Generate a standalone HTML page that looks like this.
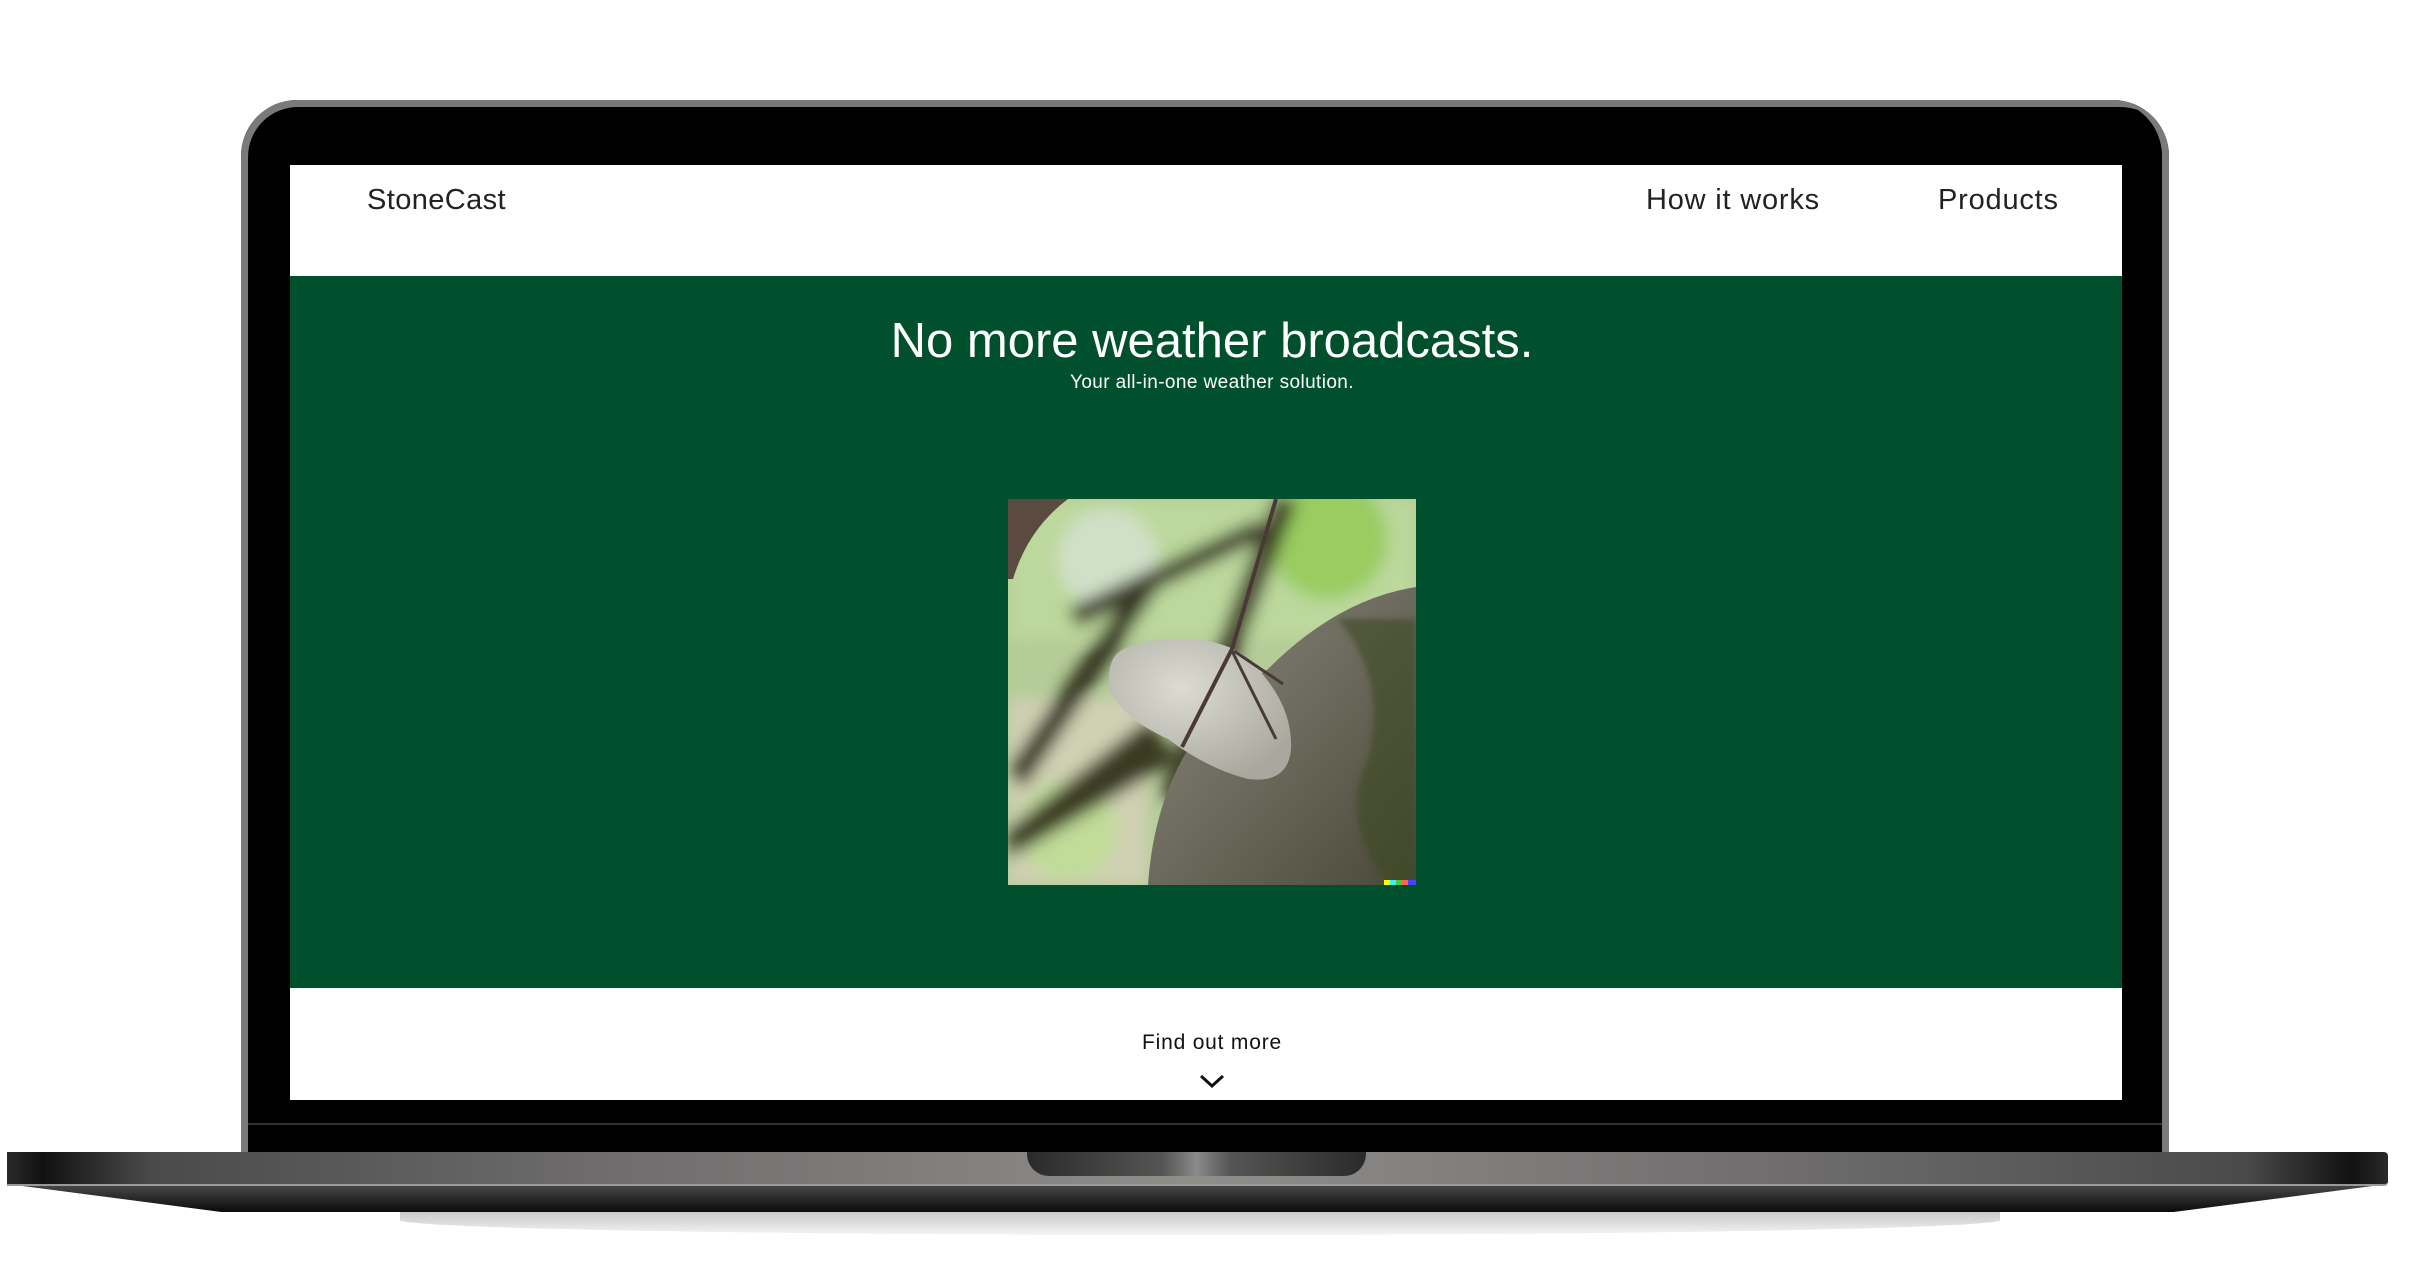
<!DOCTYPE html>
<html><head><meta charset="utf-8"><style>
html,body{margin:0;padding:0;background:#fff;}
body{width:2419px;height:1266px;position:relative;overflow:hidden;font-family:"Liberation Sans","DejaVu Sans",sans-serif;}
.abs{position:absolute;}
#lid{left:241px;top:100px;width:1928px;height:1060px;background:#000;border-radius:56px 56px 0 0;box-shadow:inset 7px 7px 0 #7a7a7a,inset -7px 0 0 #7a7a7a;}
#lidin{left:248px;top:107px;width:1914px;height:1053px;background:#000;border-radius:50px 50px 0 0;}
#screen{left:290px;top:165px;width:1832px;height:935px;background:#fff;}
#green{left:290px;top:276px;width:1832px;height:712px;background:#01502d;}
.nav{top:184px;font-size:29px;color:#222;letter-spacing:0.8px;}
h1{position:absolute;margin:0;left:296px;width:1832px;text-align:center;top:313px;font-size:49px;font-weight:normal;color:#fff;}
.sub{left:296px;width:1832px;text-align:center;top:372px;font-size:19px;color:#fff;letter-spacing:0.4px;}
.find{left:296px;width:1832px;text-align:center;top:1031px;font-size:21px;color:#111;letter-spacing:0.8px;}
#base{left:7px;top:1152px;width:2381px;height:32px;border-radius:0 4px 4px 0;background:linear-gradient(90deg,#2a2a2a 0,#111 1.5%,#4a4a4a 6%,#6e6c6c 25%,#8f8e8b 50%,#6e6c6c 75%,#4a4a4a 94%,#111 98.5%,#2a2a2a 100%);border-bottom:2px solid #999;}
#notch{left:1027px;top:1152px;width:339px;height:24px;border-radius:0 0 22px 22px;background:linear-gradient(90deg,#2a2a2a,#555 40%,#8a8a8a 50%,#555 60%,#2a2a2a);}
</style></head><body>
<div class="abs" style="left:400px;top:1205px;width:1600px;height:30px;border-radius:0 0 50% 50%;background:linear-gradient(#bbb,#f4f4f4);"></div>
<div id="lid" class="abs"></div>
<div id="lidin" class="abs"></div>
<div class="abs" style="left:248px;top:1123px;width:1914px;height:2px;background:#333;"></div>
<div id="screen" class="abs"></div>
<div id="green" class="abs"></div>
<div class="abs nav" style="left:367px;letter-spacing:0.4px;">StoneCast</div>
<div class="abs nav" style="left:1646px;">How it works</div>
<div class="abs nav" style="left:1938px;">Products</div>
<h1>No more weather broadcasts.</h1>
<div class="abs sub">Your all-in-one weather solution.</div>
<svg class="abs" style="left:1008px;top:499px" width="408" height="386" viewBox="0 0 408 386">
<defs>
<filter id="b1"><feGaussianBlur stdDeviation="8"/></filter>
<filter id="b2"><feGaussianBlur stdDeviation="3"/></filter>
<radialGradient id="st" cx="0.4" cy="0.35" r="0.7"><stop offset="0" stop-color="#dcdcd4"/><stop offset="1" stop-color="#a8a89e"/></radialGradient>
<linearGradient id="rk" x1="0" y1="0" x2="1" y2="1"><stop offset="0" stop-color="#8a8a7c"/><stop offset="0.5" stop-color="#6c6a5c"/><stop offset="1" stop-color="#4a4838"/></linearGradient>
</defs>
<rect width="408" height="386" fill="#b4cc98"/>
<g filter="url(#b1)">
<rect x="0" y="0" width="408" height="140" fill="#bcd89c"/>
<circle cx="320" cy="40" r="60" fill="#9acc60"/>
<circle cx="100" cy="60" r="50" fill="#d0e0c8"/>
<rect x="0" y="200" width="140" height="186" fill="#d0d0b4"/>
<circle cx="60" cy="330" r="50" fill="#c0dc98"/>
<path d="M0 330 L140 220 L170 260 L0 360Z" fill="#3a3a22"/>
<path d="M0 270 L130 80 L150 90 L15 290Z" fill="#30301c"/>
<path d="M150 300 L265 0 L290 0 L175 300Z" fill="#3c3c28"/>
<path d="M60 110 L250 20 L258 38 L70 128Z" fill="#3a3a26"/>
</g>
<path d="M0 0 L60 0 Q20 30 5 80 L0 80Z" fill="#5a4a40"/>
<path d="M140 386 Q150 240 260 170 Q330 100 408 88 L408 386Z" fill="url(#rk)"/>
<g filter="url(#b2)" opacity="0.6">
<path d="M330 120 Q380 180 360 260 Q330 320 380 386 L408 386 L408 120Z" fill="#3c4a20"/>
</g>
<path d="M105 160 Q115 140 180 140 Q225 142 245 165 Q285 205 283 250 Q280 285 240 280 Q200 270 160 240 Q120 222 103 195 Q98 175 105 160Z" fill="url(#st)"/>
<path d="M268 0 L224 150 L174 248" stroke="#4a3a36" stroke-width="4" fill="none"/>
<path d="M224 152 L268 240 M226 152 L275 185" stroke="#4a3a36" stroke-width="3" fill="none"/>
<rect x="376" y="381" width="6" height="5" fill="#ff0"/><rect x="382" y="381" width="6" height="5" fill="#4ee"/><rect x="388" y="381" width="6" height="5" fill="#4c4"/><rect x="394" y="381" width="6" height="5" fill="#f64"/><rect x="400" y="381" width="8" height="5" fill="#44f"/>
</svg>
<div class="abs find">Find out more</div>
<svg class="abs" style="left:1199px;top:1073px" width="26" height="16" viewBox="0 0 26 16"><path d="M2 3 L13 13 L24 3" stroke="#111" stroke-width="3" fill="none"/></svg>
<div class="abs" style="left:7px;top:1184px;width:2381px;height:28px;background:linear-gradient(#4a4a4a,#0a0a0a);clip-path:polygon(0 0,100% 0,100% 0,91% 100%,9% 100%,0 0);"></div>
<div id="base" class="abs"></div>
<div id="notch" class="abs"></div>
</body></html>
